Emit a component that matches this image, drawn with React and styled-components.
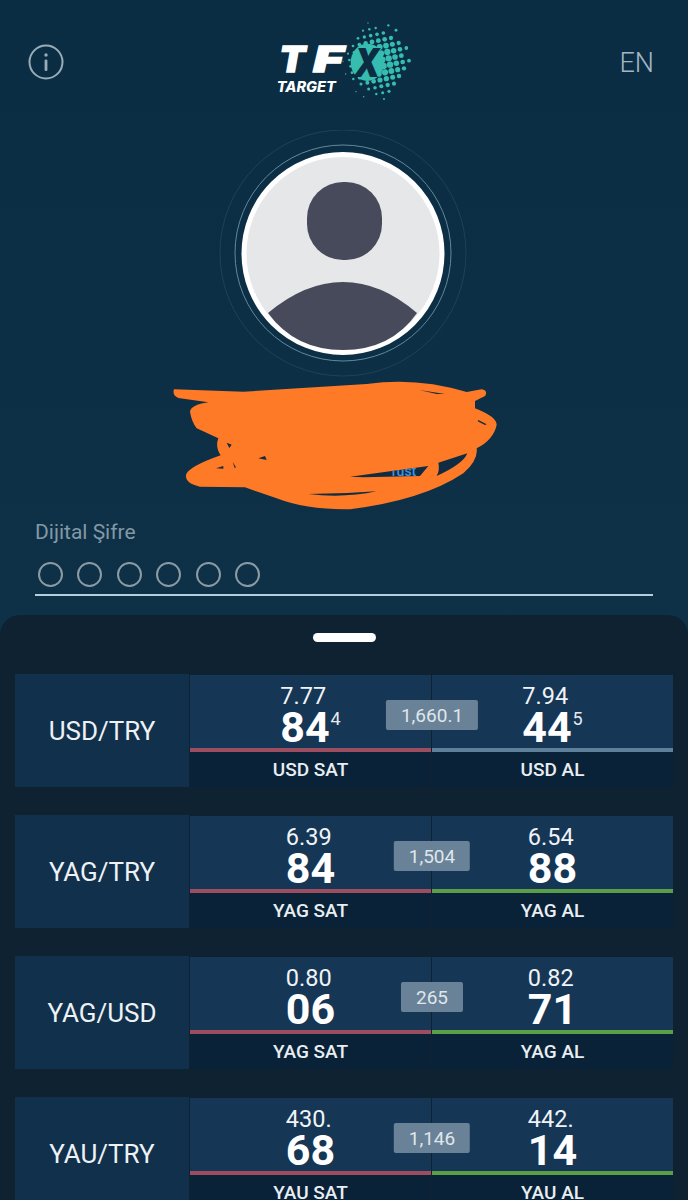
import React from 'react';
import styled, { createGlobalStyle } from 'styled-components';

const GlobalStyle = createGlobalStyle`
  html, body {
    margin: 0;
    padding: 0;
    background: #0f2231;
  }
  body {
    font-family: Roboto, "Liberation Sans", sans-serif;
  }
`;

const Screen = styled.div`
  width: 688px;
  height: 1200px;
  overflow: hidden;
  display: flex;
  flex-direction: column;
  background: linear-gradient(180deg, #0a2d44 0%, #0d3046 40%, #10354c 100%);
`;

const Header = styled.header`
  height: 110px;
  display: flex;
  align-items: flex-start;
  justify-content: space-between;
  padding: 15px 34px 0 28px;
  box-sizing: border-box;
`;

const InfoButton = styled.div`
  margin-top: 29px;
  width: 36px;
  height: 36px;
`;

const Logo = styled.svg`
  width: 160px;
  height: 95px;
  margin-right: 4px;
`;

const LangLabel = styled.div`
  margin-top: 31px;
  font-size: 27px;
  font-weight: 300;
  line-height: 34px;
  color: #a3b7c3;
`;

const AvatarWrap = styled.div`
  display: flex;
  justify-content: center;
  margin-top: 20px;
`;

const Scribble = styled.svg`
  display: block;
  flex: none;
  width: 370px;
  height: 150px;
  margin: -10px 0 0 150px;
`;

const PinField = styled.div`
  margin: 0 35px;
`;

const PinLabel = styled.div`
  font-size: 21px;
  line-height: 24px;
  height: 24px;
  color: #8298a6;
`;

const PinDots = styled.div`
  display: flex;
  gap: 14.5px;
  padding: 18px 0 7px 2.5px;
  border-bottom: 2px solid #b4cedb;
`;

const PinDot = styled.span`
  width: 21px;
  height: 21px;
  border: 2px solid #8c9ba3;
  border-radius: 50%;
`;

const Sheet = styled.section`
  flex: 1;
  margin-top: 19px;
  border-radius: 20px 20px 0 0;
  background: #0f2231;
  padding: 18px 15px 0;
`;

const Handle = styled.div`
  width: 63px;
  height: 9px;
  margin: 0 auto 32px;
  border-radius: 5px;
  background: #fff;
`;

const RateList = styled.div`
  display: flex;
  flex-direction: column;
  gap: 28px;
`;

const RateRow = styled.div`
  position: relative;
  display: grid;
  grid-template-columns: 174px 242px 242px;
  height: 113px;
`;

const PairCell = styled.div`
  display: flex;
  align-items: center;
  justify-content: center;
  background: #11304c;
  color: #eef2f5;
  font-size: 26px;
`;

const SideCell = styled.div`
  display: flex;
  flex-direction: column;
  margin-left: 1px;
`;

const PriceArea = styled.div`
  flex: 1;
  margin-top: 1px;
  display: flex;
  justify-content: center;
  background: #153655;
  border-bottom: 4px solid ${(p) => p.$bar};
`;

const PriceBlock = styled.div`
  display: flex;
  flex-direction: column;
  align-items: flex-start;
  padding-top: 10px;
  color: #fff;
`;

const PriceTop = styled.div`
  font-size: 23.5px;
  line-height: 22px;
  font-weight: 400;
  color: #f0f3f5;
`;

const PriceMain = styled.div`
  display: flex;
  align-items: flex-start;
  margin-top: 2px;
  font-size: 43px;
  line-height: 36px;
  font-weight: 700;
`;

const PriceSup = styled.sup`
  font-size: 18px;
  line-height: 20px;
  font-weight: 400;
  margin: 0 0 0 1px;
  vertical-align: baseline;
  color: #e4e9ed;
`;

const SideLabel = styled.div`
  height: 35px;
  display: flex;
  align-items: center;
  justify-content: center;
  background: #0a2238;
  color: #e9eef2;
  font-size: 19px;
  font-weight: 500;
`;

const SpreadBadge = styled.div`
  position: absolute;
  top: 26px;
  left: 417px;
  transform: translateX(-50%);
  height: 30px;
  padding: 0 15px;
  display: flex;
  align-items: center;
  background: #6a8297;
  border-radius: 2px;
  color: #dfe7ec;
  font-size: 19px;
  font-weight: 400;
`;

const rates = [
  { pair: 'USD/TRY', base: 'USD', spread: '1,660.1', sell: ['7.77', '84', '4'], buy: ['7.94', '44', '5'], buyBar: '#5f809b' },
  { pair: 'YAG/TRY', base: 'YAG', spread: '1,504', sell: ['6.39', '84'], buy: ['6.54', '88'] },
  { pair: 'YAG/USD', base: 'YAG', spread: '265', sell: ['0.80', '06'], buy: ['0.82', '71'] },
  { pair: 'YAU/TRY', base: 'YAU', spread: '1,146', sell: ['430.', '68'], buy: ['442.', '14'] },
];

// halftone disc behind the X of the logo
const logoDots = [];
for (let row = -8; row <= 8; row++) {
  for (let col = -8; col <= 8; col++) {
    const x = 348 + col * 19 + row * 4;
    const y = 138 + row * 19 - col * 4;
    const dx = (x - 348) / 102;
    const dy = (y - 138) / 123;
    const d = Math.sqrt(dx * dx + dy * dy);
    if (d > 1) continue;
    if (d > 0.82 && (row + col) % 2 !== 0) continue;
    const r = Math.min(9.5, 1.5 + (1 - d) * 11 + (dx > 0 ? dx * 4 : 0));
    logoDots.push(<circle key={`${row}:${col}`} cx={x} cy={y} r={r} />);
  }
}

const InfoIcon = () => (
  <InfoButton>
    <svg width="36" height="36" viewBox="0 0 36 36" fill="none">
      <circle cx="18" cy="18" r="16.5" stroke="#98adb8" strokeWidth="2" />
      <circle cx="18" cy="11" r="1.7" fill="#98adb8" />
      <rect x="16.6" y="15.5" width="2.8" height="11.5" rx="1.2" fill="#98adb8" />
    </svg>
  </InfoButton>
);

const LogoMark = () => (
  <Logo viewBox="0 0 480 285">
    <g fill="#36bdb0">{logoDots}</g>
    <ellipse cx="322" cy="142" rx="50" ry="56" fill="#36bdb0" />
    <text x="58" y="172" fontFamily="Inter, Roboto, sans-serif" fontSize="106" fontWeight="900" fontStyle="italic" fill="#fff" stroke="#fff" strokeWidth="4" textLength="78" lengthAdjust="spacingAndGlyphs">T</text>
    <text x="160" y="172" fontFamily="Inter, Roboto, sans-serif" fontSize="106" fontWeight="900" fontStyle="italic" fill="#fff" stroke="#fff" strokeWidth="4" textLength="90" lengthAdjust="spacingAndGlyphs">F</text>
    <text x="282" y="186" fontFamily="Inter, Roboto, sans-serif" fontSize="118" fontWeight="900" fontStyle="italic" fill="#0c2c42" textLength="78" lengthAdjust="spacingAndGlyphs">X</text>
    <text x="50" y="232" fontFamily="Inter, Roboto, sans-serif" fontSize="42" fontWeight="800" fontStyle="italic" fill="#fff" textLength="178" lengthAdjust="spacingAndGlyphs">TARGET</text>
  </Logo>
);

const Avatar = () => (
  <svg width="250" height="250" viewBox="220 130 250 250">
    <circle cx="344" cy="253" r="123" fill="none" stroke="#1b4358" strokeWidth="1" />
    <circle cx="344" cy="253" r="108" fill="none" stroke="#5f8a9b" strokeWidth="1" />
    <circle cx="344" cy="253.5" r="99" fill="#e6e7e8" stroke="#fff" strokeWidth="5" />
    <rect x="308" y="182" width="75" height="78" rx="36" fill="#474a5a" />
    <path d="M269 313 Q306 282 344 282 Q382 282 418 313 Q392 350 344 350 Q296 350 269 313 Z" fill="#474a5a" />
  </svg>
);

const ScribbleMark = () => (
  <Scribble viewBox="0 0 1110 450">
    <defs>
      <clipPath id="peek">
        <path d="M600 320 L835 288 L810 318 L640 322 Z" />
      </clipPath>
    </defs>
    <path
      d="M72 58 Q66 76 85 84 L175 97 Q122 105 120 125 Q125 155 140 175 L205 205 Q195 232 212 256 Q115 290 108 315 Q105 340 150 350 L285 352 L380 385 Q470 420 600 418 Q820 390 940 310 Q985 270 980 235 Q1030 210 1040 165 Q1040 140 975 115 L975 93 L1005 78 Q1015 62 995 58 L950 66 Q800 20 650 42 L280 65 Z"
      fill="#ff7a26"
    />
    <g fill="#102c42">
      <path d="M808 60 L885 72 L860 72 Z" />
      <path d="M985 150 L1010 163 L1005 165 L983 154 Z" />
      <path d="M230 218 L245 224 L238 234 Z" />
      <path d="M325 265 L345 258 L350 270 Z" />
      <path d="M198 295 L220 288 L220 296 Z" />
      <path d="M248 276 L258 292 L254 294 Z" />
      <path d="M475 372 Q580 385 680 364 Q580 372 475 372 Z" />
      <path d="M865 278 L952 250 Q940 282 860 318 Q870 300 865 278 Z" />
      <path d="M600 320 L835 288 L810 318 L640 322 Z" />
    </g>
    <g clipPath="url(#peek)">
      <text x="725" y="318" fontFamily="Roboto, sans-serif" fontSize="42" fontWeight="500" fill="#3f94e0">rust</text>
    </g>
  </Scribble>
);

const Side = ({ values, label, bar }) => (
  <SideCell>
    <PriceArea $bar={bar}>
      <PriceBlock>
        <PriceTop>{values[0]}</PriceTop>
        <PriceMain>
          {values[1]}
          {values[2] && <PriceSup>{values[2]}</PriceSup>}
        </PriceMain>
      </PriceBlock>
    </PriceArea>
    <SideLabel>{label}</SideLabel>
  </SideCell>
);

const App = () => (
  <Screen>
    <GlobalStyle />
    <Header>
      <InfoIcon />
      <LogoMark />
      <LangLabel>EN</LangLabel>
    </Header>
    <AvatarWrap>
      <Avatar />
    </AvatarWrap>
    <ScribbleMark />
    <PinField>
      <PinLabel>Dijital Şifre</PinLabel>
      <PinDots>
        {[0, 1, 2, 3, 4, 5].map((i) => (
          <PinDot key={i} />
        ))}
      </PinDots>
    </PinField>
    <Sheet>
      <Handle />
      <RateList>
        {rates.map((r) => (
          <RateRow key={r.pair}>
            <PairCell>{r.pair}</PairCell>
            <Side values={r.sell} label={`${r.base} SAT`} bar="#9c4d60" />
            <Side values={r.buy} label={`${r.base} AL`} bar={r.buyBar || '#5a9f48'} />
            <SpreadBadge>{r.spread}</SpreadBadge>
          </RateRow>
        ))}
      </RateList>
    </Sheet>
  </Screen>
);

export default App;
